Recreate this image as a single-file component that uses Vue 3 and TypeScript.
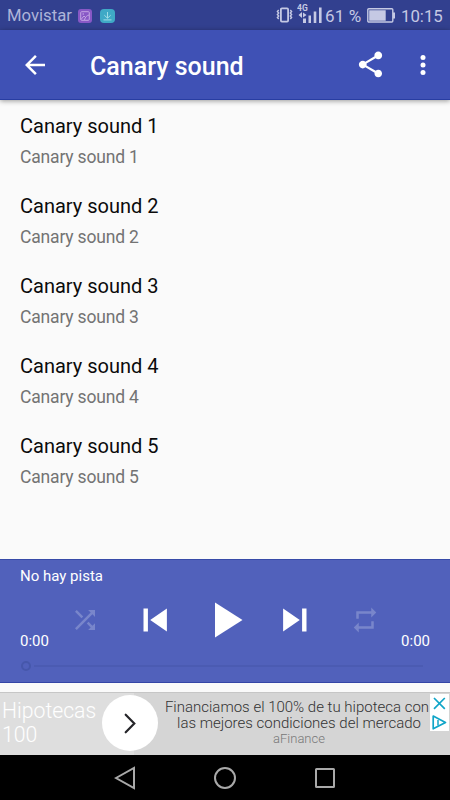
<script setup lang="ts">
interface Track {
  id: number
  title: string
  subtitle: string
}

const tracks: Track[] = [1, 2, 3, 4, 5].map((n) => ({
  id: n,
  title: `Canary sound ${n}`,
  subtitle: `Canary sound ${n}`,
}))
</script>

<template>
  <div class="screen">
    <div class="status">
      <span class="carrier">Movistar</span>
      <svg class="badge" width="14" height="14" viewBox="0 0 14 14">
        <rect width="14" height="14" rx="3" fill="#8858c6" />
        <rect x="2.7" y="2.7" width="8.6" height="8.6" rx="1" fill="none" stroke="#c3a5e4" stroke-width="1" />
        <path d="M3 10.5L6 7l1.5 1.5M6.5 11C7 8 9 6.5 11 6" fill="none" stroke="#c3a5e4" stroke-width="1" />
        <circle cx="5.2" cy="5" r=".8" fill="#c3a5e4" />
      </svg>
      <svg class="badge second" width="15" height="14" viewBox="0 0 15 14">
        <rect width="15" height="14" rx="4" fill="#3fa9c6" />
        <path d="M7.5 3v6M4.300 6.200l3.200 3 3.200-3M3.500 10.900h8" fill="none" stroke="#a0dce6" stroke-width="1" />
      </svg>
      <span class="grow"></span>
      <svg class="vibrate" width="17" height="16" viewBox="0 0 17 16">
        <rect x="4.900" y="1.400" width="7.200" height="13.200" rx="1" fill="none" stroke="#c5c9e4" stroke-width="1.800" />
        <path d="M2.700 3l-1.300 1.500 1.300 1.500-1.300 1.500 1.300 1.500-1.300 1.500 1.300 1.500M14.300 3l1.300 1.500-1.300 1.500 1.300 1.500-1.300 1.500 1.300 1.500-1.300 1.500" fill="none" stroke="#c5c9e4" stroke-width="1.400" />
      </svg>
      <svg class="signal" width="28" height="24" viewBox="0 -2 28 24">
        <text x="0" y="6.200" class="net">4G</text>
        <path d="M1.500 10l3.500-3v6zM9.500 10L6 7.500v5z" fill="#c5c9e4" />
        <path d="M6 13.500h3V18H6zM11.500 10.500H14V18h-2.500zM16.700 6.500h2.600V18h-2.600zM22 2.500h2.600V18H22z" fill="#c5c9e4" />
      </svg>
      <span class="percent">61 %</span>
      <svg class="battery" width="28" height="15" viewBox="0 0 28 15">
        <rect x=".8" y=".8" width="25" height="13.200" rx="1" fill="none" stroke="#c5c9e4" stroke-width="1.400" />
        <path d="M2.200 2.200h16.500v10.500H2.200zM26 4.500h2v6h-2z" fill="#c5c9e4" />
      </svg>
      <span class="clock">10:15</span>
    </div>

    <header class="appbar">
      <svg class="back" width="30" height="30" viewBox="0 0 24 24">
        <path d="M20 11H7.830l5.590-5.590L12 4l-8 8 8 8 1.410-1.410L7.830 13H20v-2z" fill="#fff" />
      </svg>
      <h1>Canary sound</h1>
      <svg class="share" width="31" height="31" viewBox="0 0 24 24">
        <path d="M18 16.080c-.76 0-1.440.3-1.960.77L8.910 12.700c.05-.23.09-.46.09-.7s-.04-.47-.09-.7l7.050-4.110c.54.5 1.250.81 2.040.81 1.660 0 3-1.340 3-3s-1.340-3-3-3-3 1.340-3 3c0 .24.04.47.09.7L8.040 9.810C7.500 9.310 6.790 9 6 9c-1.660 0-3 1.340-3 3s1.340 3 3 3c.79 0 1.500-.31 2.040-.81l7.120 4.160c-.05.21-.08.43-.08.65 0 1.610 1.310 2.920 2.920 2.920s2.920-1.310 2.920-2.920-1.310-2.920-2.920-2.920z" fill="#fff" />
      </svg>
      <svg class="more" width="30" height="30" viewBox="0 0 24 24">
        <g fill="#fff"><circle cx="12" cy="6" r="2" /><circle cx="12" cy="12" r="2" /><circle cx="12" cy="18" r="2" /></g>
      </svg>
    </header>

    <main class="list">
      <div v-for="track in tracks" :key="track.id" class="track">
        <div class="title">{{ track.title }}</div>
        <div class="subtitle">{{ track.subtitle }}</div>
      </div>
    </main>

    <section class="player">
      <div class="now">No hay pista</div>
      <div class="row">
        <span class="time">0:00</span>
        <div class="controls">
          <svg width="30" height="30" viewBox="0 0 24 24" class="dim">
            <path d="M10.590 9.170L5.410 4 4 5.410l5.170 5.170 1.420-1.410zM14.500 4l2.040 2.040L4 18.590 5.410 20 17.960 7.460 20 9.500V4h-5.500zm.33 9.410l-1.410 1.410 3.130 3.130L14.500 20H20v-5.500l-2.040 2.040-3.130-3.130z" />
          </svg>
          <svg width="46" height="46" viewBox="0 0 24 24"><path d="M6 6h2.300v12H6zm3.500 6l8.700 6V6z" /></svg>
          <svg width="60" height="60" viewBox="0 0 24 24"><path d="M8 5v14l11-7z" /></svg>
          <svg width="46" height="46" viewBox="0 0 24 24"><path d="M5.800 18l8.700-6-8.700-6v12zM15.700 6v12H18V6h-2.300z" /></svg>
          <svg width="30" height="30" viewBox="0 0 24 24" class="dim">
            <path d="M7 7h10v3l4-4-4-4v3H5v6h2V7zm10 10H7v-3l-4 4 4 4v-3h12v-6h-2v4z" />
          </svg>
        </div>
        <span class="time">0:00</span>
      </div>
      <div class="seek"><span class="knob"></span><span class="line"></span></div>
    </section>

    <section class="ad">
      <div class="brand">Hipotecas<br />100</div>
      <div class="go">
        <svg width="12" height="21" viewBox="0 0 12 21">
          <path d="M1.700 1.700l8.600 8.800-8.600 8.800" fill="none" stroke="#252529" stroke-width="2.200" stroke-linecap="round" />
        </svg>
      </div>
      <div class="copy">
        <div class="l1">Financiamos el 100% de tu hipoteca con</div>
        <div class="l2">las mejores condiciones del mercado</div>
        <div class="advertiser">aFinance</div>
      </div>
      <div class="choices">
        <svg width="19" height="37" viewBox="0 0 19 37" fill="none" stroke="#10a5c8" stroke-width="1.700">
          <path d="M4 4l10.800 10.800M14.800 4L4 14.800" />
          <path d="M3.200 22.100v12.700L15.500 28.400z" stroke-linejoin="round" />
          <path d="M8 26v5.500" stroke-width="1.500" />
        </svg>
      </div>
    </section>

    <nav class="nav">
      <svg width="22" height="24" viewBox="0 0 22 24"><path d="M2 12L20 2v20z" /></svg>
      <svg width="24" height="24" viewBox="0 0 24 24"><circle cx="12" cy="12" r="10" /></svg>
      <svg width="22" height="22" viewBox="0 0 22 22"><rect x="2" y="2" width="18" height="18" rx=".5" /></svg>
    </nav>
  </div>
</template>

<style>
body {
  margin: 0;
}
</style>

<style scoped>
.screen {
  width: 450px;
  height: 800px;
  display: flex;
  flex-direction: column;
  overflow: hidden;
  background: #fafafa;
  font-family: Roboto, sans-serif;
}
svg {
  display: block;
  flex: none;
}
.status {
  height: 30px;
  flex: none;
  display: flex;
  align-items: center;
  box-sizing: border-box;
  padding: 1px 8px 0 7px;
  background: #32408f;
  color: #c5c9e4;
  font-size: 17px;
  white-space: nowrap;
}
.carrier {
  width: 71px;
  font-size: 16.700px;
  color: #adb4d9;
}
.second {
  margin-left: 8px;
}
.grow {
  flex: 1;
}
.vibrate {
  margin-top: -1px;
}
.signal {
  margin: -1px 0 0 4px;
}
.net {
  font-size: 8.500px;
  font-weight: 700;
  fill: #c5c9e4;
}
.percent {
  width: 42px;
  letter-spacing: 0.1px;
}
.clock {
  width: 41px;
  margin-left: 6px;
  font-size: 16.800px;
}
.appbar {
  height: 70px;
  flex: none;
  box-sizing: border-box;
  display: flex;
  align-items: center;
  padding: 0 12.500px 0 20px;
  background: #3f51b5;
  border-bottom: 1px solid #283da2;
  box-shadow: 0 1px 5px rgba(0, 0, 0, 0.4);
  color: #fff;
}
h1 {
  flex: 1;
  margin: 3px 0 0 40px;
  font-size: 25px;
  font-weight: 500;
}
.more {
  margin-left: 22px;
}
.list {
  height: 459px;
  flex: none;
}
.track {
  height: 80px;
  box-sizing: border-box;
  padding: 13px 20px 0;
}
.title {
  font-size: 20px;
  line-height: 26px;
  color: #0b0b0b;
}
.subtitle {
  margin-top: 6px;
  font-size: 17.500px;
  letter-spacing: -0.17px;
  line-height: 24px;
  color: #737373;
}
.player {
  height: 124px;
  flex: none;
  box-sizing: border-box;
  border-top: 1px solid #374aa8;
  border-bottom: 1px solid #3445a6;
  padding: 6px 20px 0;
  background: #5161bb;
  color: #fff;
}
.now {
  font-size: 15px;
  line-height: 20px;
}
.row {
  display: flex;
  align-items: flex-end;
  justify-content: space-between;
  height: 65px;
}
.time {
  font-size: 15px;
  line-height: 20px;
}
.controls {
  display: grid;
  grid-template-columns: repeat(5, 70px);
  place-items: center;
  align-self: flex-start;
  height: 68px;
}
.controls svg {
  fill: #fff;
}
.controls svg.dim {
  fill: #7986cb;
}
.seek {
  display: flex;
  align-items: center;
  gap: 3px;
  height: 30px;
  padding: 0 7px 0 1px;
}
.knob {
  width: 6px;
  height: 6px;
  border: 2px solid #4657ab;
  border-radius: 50%;
}
.line {
  flex: 1;
  height: 2px;
  background: #4b5bb2;
}
.ad {
  margin-top: 9px;
  height: 63px;
  flex: none;
  box-sizing: border-box;
  border-top: 1px solid #c6c6c6;
  display: flex;
  background: linear-gradient(90deg, #dedede 0 134px, #d5d5d5 134px);
}
.brand {
  width: 102px;
  padding: 6px 0 0 2px;
  box-sizing: border-box;
  color: #fff;
  font-size: 21.200px;
  line-height: 24px;
  font-weight: 300;
  white-space: nowrap;
}
.go {
  width: 56px;
  height: 56px;
  margin-top: 2px;
  border-radius: 50%;
  background: #fff;
  display: flex;
  align-items: center;
  justify-content: center;
}
.copy {
  width: 270px;
  padding-top: 6px;
  box-sizing: border-box;
  display: flex;
  flex-direction: column;
  align-items: center;
  white-space: nowrap;
  color: #333;
  font-size: 15px;
  line-height: 16.400px;
  font-weight: 300;
}
.l1 {
  margin-left: 8px;
}
.l2 {
  margin-left: 12px;
}
.advertiser {
  margin-left: 12px;
  font-size: 13px;
  line-height: 14px;
  color: #777;
}
.choices {
  width: 19px;
  height: 37px;
  margin: 1px 1px 0 auto;
  background: #fff;
}
.nav {
  height: 45px;
  flex: none;
  display: flex;
  align-items: center;
  justify-content: space-between;
  box-sizing: border-box;
  padding: 0 114px;
  background: #000;
}
.nav svg {
  fill: none;
  stroke: #a9a9a9;
  stroke-width: 2;
}
</style>
